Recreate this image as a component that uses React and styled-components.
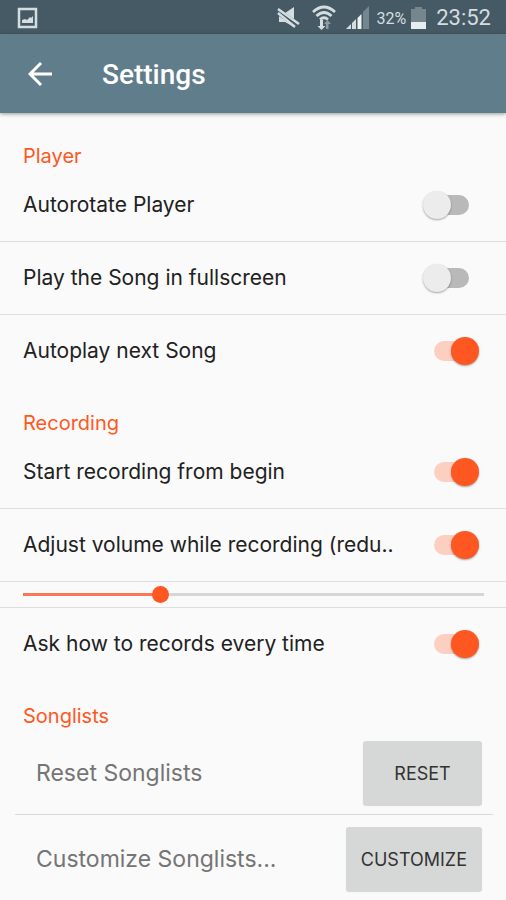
import { useState } from "react";
import styled, { createGlobalStyle } from "styled-components";

const GlobalStyle = createGlobalStyle`
  * {
    box-sizing: border-box;
  }
  body {
    margin: 0;
    background-color: #fafafa;
    font-family: Inter, "Liberation Sans", sans-serif;
    color: #212121;
  }
`;

const StatusBar = styled.div`
  height: 34px;
  padding: 2px 15px 0 16px;
  display: flex;
  align-items: center;
  justify-content: space-between;
  background-color: #455a64;
  font-family: Roboto, sans-serif;
  color: #d5dde1;
`;

const StatusIcons = styled.div`
  display: flex;
  align-items: center;
`;

const StatusIcon = styled.svg`
  display: block;
  margin-right: ${(props) => props.$gap || 0}px;
`;

const Battery = styled.span`
  font-size: 16px;
  margin-right: 5px;
`;

const Clock = styled.span`
  font-size: 22px;
  line-height: 32px;
`;

const AppBar = styled.header`
  height: 79px;
  padding: 0 20px;
  display: flex;
  align-items: center;
  gap: 42px;
  background-color: #607d8b;
  box-shadow: 0 1px 4px rgba(0, 0, 0, 0.4);
`;

const BackButton = styled.button`
  width: 40px;
  height: 40px;
  padding: 0;
  border: none;
  display: flex;
  align-items: center;
  justify-content: center;
  background: none;
  color: white;
  cursor: pointer;
`;

const Title = styled.h1`
  margin: 0;
  padding-top: 2px;
  font-family: Roboto, sans-serif;
  font-size: 28px;
  font-weight: 500;
  line-height: 32px;
  color: white;
`;

const Content = styled.main`
  padding-top: 8px;
`;

const SectionTitle = styled.h2`
  height: 48px;
  margin: 0;
  padding: 24px 23px 0;
  font-size: 20px;
  font-weight: 400;
  line-height: 22px;
  color: #ff5722;
`;

const Row = styled.div`
  height: 73px;
  padding: 0 27px 0 23px;
  display: flex;
  align-items: center;
  justify-content: space-between;
  border-bottom: 1px solid ${(props) => (props.$last ? "transparent" : "#dedede")};
`;

const RowLabel = styled.label`
  font-size: 21px;
  line-height: 24px;
  white-space: nowrap;
`;

const Switch = styled.input`
  appearance: none;
  width: 56px;
  height: 28px;
  margin: 0;
  flex-shrink: 0;
  display: grid;
  align-items: center;
  cursor: pointer;

  &::before,
  &::after {
    content: "";
    grid-area: 1 / 1;
  }
  &::before {
    height: 20px;
    margin: 0 10px 0 11px;
    border-radius: 10px;
    background-color: #b9b9b9;
  }
  &::after {
    width: 28px;
    height: 28px;
    border-radius: 50%;
    background-color: #ececec;
    box-shadow: 0 1px 2px rgba(0, 0, 0, 0.35);
  }
  &:checked::before {
    background-color: #fdcfc0;
  }
  &:checked::after {
    justify-self: end;
    background-color: #ff5722;
  }
`;

const SliderRow = styled.div`
  height: 26px;
  padding: 0 22px 0 23px;
  display: flex;
  align-items: center;
  border-bottom: 1px solid #dedede;
`;

const Slider = styled.input`
  appearance: none;
  width: 100%;
  height: 18px;
  margin: 0;
  background: none;
  cursor: pointer;

  &::-webkit-slider-runnable-track {
    height: 3px;
    background: linear-gradient(
      to right,
      #fb7659 var(--filled),
      #d6d6d6 var(--filled)
    );
  }
  &::-webkit-slider-thumb {
    appearance: none;
    width: 17px;
    height: 17px;
    margin-top: -7px;
    border-radius: 50%;
    background-color: #ff5722;
  }
`;

const ActionRow = styled.div`
  height: 86px;
  margin: 0 13px 0 15px;
  padding: 12px 11px 9px 21px;
  display: flex;
  align-items: center;
  justify-content: space-between;
  border-bottom: 1px solid ${(props) => (props.$last ? "transparent" : "#dadada")};
`;

const ActionText = styled.span`
  font-size: 23px;
  line-height: 28px;
  color: #757575;
`;

const Button = styled.button`
  height: 64px;
  min-width: 119px;
  padding: 0 15px;
  border: none;
  border-radius: 3px;
  background-color: #d6d8d7;
  box-shadow: 0 1px 1px rgba(0, 0, 0, 0.15);
  font-family: inherit;
  font-size: 18px;
  color: #333333;
  text-transform: uppercase;
  cursor: pointer;
`;

const SwitchRow = ({ id, label, on, last }) => {
  const [checked, setChecked] = useState(on);

  return (
    <Row $last={last}>
      <RowLabel htmlFor={id}>{label}</RowLabel>
      <Switch
        id={id}
        type="checkbox"
        role="switch"
        checked={checked}
        onChange={(e) => setChecked(e.target.checked)}
      />
    </Row>
  );
};

const VolumeSlider = () => {
  const [volume, setVolume] = useState(29);

  return (
    <SliderRow>
      <Slider
        type="range"
        aria-label="Recording volume"
        min="0"
        max="100"
        value={volume}
        onChange={(e) => setVolume(Number(e.target.value))}
        style={{ "--filled": `${volume}%` }}
      />
    </SliderRow>
  );
};

const App = () => {
  return (
    <>
      <GlobalStyle />
      <StatusBar>
        <StatusIcon width="22" height="22" viewBox="0 0 22 22" fill="none">
          <rect x="3" y="2" width="17" height="18" stroke="#d5dde1" strokeWidth="2.5" />
          <path d="M6 16v-3l3-1 2 1 3-3 1 1 2-2v7z" fill="#d5dde1" />
        </StatusIcon>
        <StatusIcons>
          {/* muted */}
          <StatusIcon $gap={12} width="24" height="24" viewBox="0 0 24 24">
            <path d="M3 7h6l9-6v20l-9-5H3z" fill="#d5dde1" />
            <path d="M1 5l22 15" stroke="#455a64" strokeWidth="6" />
            <path d="M2 3l21 15M2 7l17 14" stroke="#d5dde1" strokeWidth="2.5" />
          </StatusIcon>
          {/* wifi */}
          <StatusIcon $gap={10} width="24" height="26" viewBox="0 0 24 26" fill="none">
            <path
              d="M1 7Q12-3 23 7M4.500 11Q12 4 19.500 11M8 14.500Q12 11 16 14.500"
              stroke="#d5dde1"
              strokeWidth="2.800"
            />
            <path d="M8 15h3v6h2.500L9.500 25l-4-4H8z" fill="#d5dde1" />
            <path d="M14 24v-5h-2l3.500-4 3.500 4h-2.500v5z" fill="#8d9ba2" />
          </StatusIcon>
          {/* signal */}
          <StatusIcon $gap={8} width="23" height="24" viewBox="0 0 23 24">
            <path d="M0 23l5-5v5z" fill="#d5dde1" />
            <path d="M6 17l4-4v10H6z" fill="#d5dde1" />
            <path d="M11.500 12l4-4v15h-4z" fill="#eef2f3" />
            <path d="M17 6l6-6v23h-6z" fill="#75868e" />
          </StatusIcon>
          <Battery>32%</Battery>
          <StatusIcon $gap={10} width="15" height="24" viewBox="0 0 15 24">
            <path d="M4 1h7v2h4v20H0V3h4z" fill="#75868e" />
            <path d="M0 16h15v7H0z" fill="#e6eef2" />
          </StatusIcon>
          <Clock>23:52</Clock>
        </StatusIcons>
      </StatusBar>

      <AppBar>
        <BackButton aria-label="Back">
          <svg width="24" height="24" viewBox="0 0 24 24" fill="none">
            <path d="M13 1L2 12l11 11M2 12h22" stroke="currentColor" strokeWidth="3" />
          </svg>
        </BackButton>
        <Title>Settings</Title>
      </AppBar>

      <Content>
        <SectionTitle>Player</SectionTitle>
        <SwitchRow id="autorotate" label="Autorotate Player" on={false} />
        <SwitchRow id="fullscreen" label="Play the Song in fullscreen" on={false} />
        <SwitchRow id="autoplay" label="Autoplay next Song" on={true} last />

        <SectionTitle>Recording</SectionTitle>
        <SwitchRow id="begin" label="Start recording from begin" on={true} />
        <SwitchRow id="adjust" label="Adjust volume while recording (redu.." on={true} />
        <VolumeSlider />
        <SwitchRow id="ask" label="Ask how to records every time" on={true} last />

        <SectionTitle>Songlists</SectionTitle>
        <ActionRow>
          <ActionText>Reset Songlists</ActionText>
          <Button>Reset</Button>
        </ActionRow>
        <ActionRow $last>
          <ActionText>Customize Songlists...</ActionText>
          <Button>Customize</Button>
        </ActionRow>
      </Content>
    </>
  );
};

export default App;
